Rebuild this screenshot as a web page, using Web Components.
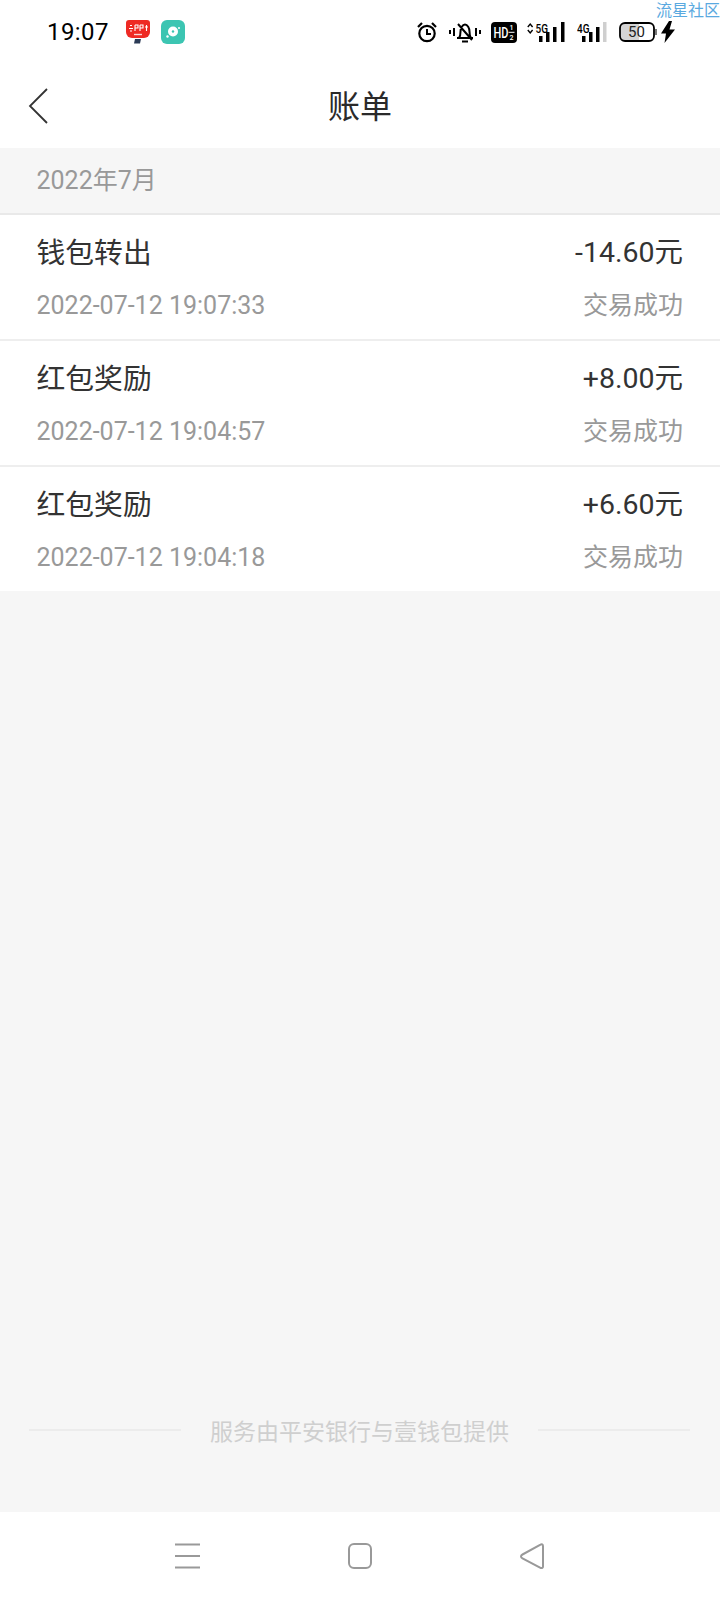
<!DOCTYPE html>
<html lang="zh"><head><meta charset="utf-8"><title>账单</title>
<style>
html,body{margin:0;padding:0;height:1600px;overflow:hidden;background:#f6f6f6}
body{font-family:Roboto,"Noto Sans CJK SC",sans-serif}
bill-app{height:1600px}
</style></head><body>
<bill-app>
  <status-bar slot="top"></status-bar>
  <nav-header slot="top">账单</nav-header>
  <month-header>2022年7月</month-header>
  <bill-row title="钱包转出" time="2022-07-12 19:07:33" amount="-14.60元" state="交易成功"></bill-row>
  <bill-row title="红包奖励" time="2022-07-12 19:04:57" amount="+8.00元" state="交易成功"></bill-row>
  <bill-row title="红包奖励" time="2022-07-12 19:04:18" amount="+6.60元" state="交易成功" last></bill-row>
  <service-footer slot="foot">服务由平安银行与壹钱包提供</service-footer>
  <system-nav slot="foot"></system-nav>
</bill-app>
<script>
function def(name,html){customElements.define(name,class extends HTMLElement{
  constructor(){super();this.attachShadow({mode:'open'}).innerHTML=html;}
});}
def('bill-app',`<style>:host{display:flex;flex-direction:column;background:#f6f6f6}
.main{flex:1;display:flex;flex-direction:column}</style>
<slot name="top"></slot><div class="main"><slot></slot></div><slot name="foot"></slot>`);

def('status-bar',`<style>
:host{display:flex;position:relative;overflow:hidden;height:62px;background:#fff;align-items:center;padding:2px 0 0 47px;box-sizing:border-box;color:#000}
.t{font:400 24px/30px Roboto,sans-serif;letter-spacing:.4px;width:79px}
svg{display:block;flex:none}
.mark{position:absolute;right:0;top:0;font:400 16px/18px "Noto Sans CJK SC",sans-serif;color:#5aa9e0;white-space:nowrap}
.app{display:flex;gap:11px;align-items:center}
.right{display:flex;align-items:center;position:absolute;left:417px;top:21px;height:22px}
text{font-family:Roboto,sans-serif;font-weight:500}
</style>
<div class="t">19:07</div>
<div class="app">
<svg width="24" height="24" viewBox="0 0 24 24"><path d="M3 0h18a3 3 0 0 1 3 3v9a6 6 0 0 1-6 6H6a6 6 0 0 1-6-6V3a3 3 0 0 1 3-3z" fill="#ee2a24"/><path d="M3 8.500h4M4 5.500h2M4 11h2M9 5v6M9 5h3v3H9M14 5v6M14 5h3v3h-3M19 7h3M20.500 5v6" stroke="#fff" stroke-width="1.100" fill="none"/><path d="M8 14.500h8" stroke="#fff" stroke-width="1.400" opacity=".8"/><path d="M9 19h6l-1 4.500H8z" fill="#2b3a55"/></svg>
<svg width="24" height="24" viewBox="0 0 24 24"><rect width="24" height="24" rx="6" fill="#3cc5b2"/><circle cx="12" cy="11.500" r="5" fill="#fff"/><circle cx="12" cy="11.500" r="1.200" fill="#3cc5b2"/><circle cx="18" cy="8" r="1" fill="#fff"/><circle cx="6.500" cy="16.500" r="1.200" fill="#fff"/></svg>
</div>
<div class="right">
<svg width="20" height="21" viewBox="0 0 20 21" style="margin-right:12px"><circle cx="10" cy="11.500" r="7.700" fill="none" stroke="#000" stroke-width="2.200"/><path d="M10 7v5h4" fill="none" stroke="#000" stroke-width="2"/><path d="M1 5l4-4M19 5l-4-4" stroke="#000" stroke-width="2.200"/></svg>
<svg width="32" height="22" viewBox="0 0 32 22" style="margin-right:10px"><path d="M1 9v4M5 7v8M27 7v8M31 9v4" stroke="#000" stroke-width="2"/><path d="M8 17h16M10 17c1.500-2 1.500-4 1.500-6.500 0-3.500 2-7 4.500-7s4.500 3.500 4.500 7c0 2.500 0 4.500 1.500 6.500M13 20.500h6M9 3l14 16" fill="none" stroke="#000" stroke-width="2"/></svg>
<svg width="26" height="21" viewBox="0 0 26 21" style="margin-right:10px"><rect width="26" height="21" rx="4" fill="#000"/><text transform="translate(2.500 16) scale(1 1.350)" font-size="11" fill="#fff">HD</text><text x="18.500" y="8" font-size="7" fill="#fff">1</text><text x="18.500" y="18" font-size="7" fill="#fff">2</text><path d="M17.500 10.300h6" stroke="#fff"/></svg>
<svg width="38" height="22" viewBox="0 0 38 22" style="margin-right:12px"><path d="M.8 6l2.400-3 2.400 3M.8 9l2.400 3 2.400-3" fill="none" stroke="#000" stroke-width="1.400"/><text transform="translate(8.500 12) scale(1 1.300)" font-size="10">5G</text><rect x="12" y="15" width="3.500" height="6" fill="#000"/><rect x="19" y="11" width="3.500" height="10" fill="#000"/><rect x="26" y="6" width="3.500" height="15" fill="#000"/><rect x="34" y="1" width="3.500" height="20" fill="#000"/></svg>
<svg width="30" height="22" viewBox="0 0 30 22" style="margin-right:12px"><text transform="translate(0 12) scale(1 1.300)" font-size="10">4G</text><rect x="5" y="15" width="3.500" height="6" fill="#000"/><rect x="12" y="11" width="3.500" height="10" fill="#000"/><rect x="19" y="6" width="3.500" height="15" fill="#000"/><rect x="26" y="1" width="3.500" height="20" fill="#cfcfcf"/></svg>
<svg width="38" height="20" viewBox="0 0 38 20" style="margin-right:4px"><path d="M5 1.500h15v17H5a3.500 3.500 0 0 1-3.500-3.500V5A3.500 3.500 0 0 1 5 1.500z" fill="#d4d4d4"/><rect x="1" y="1" width="34" height="18" rx="5" fill="none" stroke="#000" stroke-width="1.800"/><rect x="36" y="7" width="2" height="6" fill="#777"/><text x="17.500" y="15.200" font-size="15" text-anchor="middle" style="font-weight:400" fill="#222">50</text></svg>
<svg width="14" height="22" viewBox="0 0 14 22"><path d="M8 0L0 12.500h5L3.500 22 14 8.500H8.500L11 0z" fill="#000"/></svg>
</div>
<div class="mark">流星社区</div>`);

def('nav-header',`<style>
:host{display:flex;height:86px;background:#fff;align-items:center;justify-content:center;position:relative;box-sizing:border-box}
.b{position:absolute;left:28px;top:26px}
.c{font:400 32px/40px "Noto Sans CJK SC",sans-serif;color:#2a2a2a;transform:translateY(-1px)}
</style>
<svg class="b" width="20" height="36" viewBox="0 0 20 36"><path d="M19 1L2 18l17 17" fill="none" stroke="#333" stroke-width="1.800"/></svg>
<div class="c"><slot></slot></div>`);

def('month-header',`<style>
:host{display:flex;height:67px;align-items:center;padding:0 36.500px;box-sizing:border-box;background:#f6f6f6;border-bottom:2px solid #e9e9e9;font:400 25px/32px Roboto,"Noto Sans CJK SC",sans-serif;color:#999}
</style><slot></slot>`);

customElements.define('bill-row',class extends HTMLElement{
 constructor(){super();this.attachShadow({mode:'open'});}
 connectedCallback(){const a=n=>this.getAttribute(n),l=this.hasAttribute('last');this.shadowRoot.innerHTML=`<style>
 :host{display:grid;grid-template-columns:1fr auto;grid-template-rows:auto auto;row-gap:18px;height:${l?124:126}px;box-sizing:border-box;padding:19px 37px 0 36.500px;background:#fff;${l?'':'border-bottom:2px solid #eeeeee;'}align-content:start}
 .ti,.am{font:400 28.500px/38px Roboto,"Noto Sans CJK SC",sans-serif;color:#333}
 .ti{font-size:28.800px}
 .am{text-align:right}
 .tm,.st{font:400 25px/32px Roboto,"Noto Sans CJK SC",sans-serif;color:#999}
 .st{text-align:right}
 </style><div class="ti">${a('title')}</div><div class="am">${a('amount')}</div><div class="tm">${a('time')}</div><div class="st">${a('state')}</div>`;}
});

def('service-footer',`<style>
:host{display:flex;align-items:center;gap:29px;padding:0 30px 48px 29px;height:116px;box-sizing:border-box;background:#f6f6f6;font:400 23px/34px "Noto Sans CJK SC",sans-serif;color:#cfcfcf}
i{flex:1;height:2px;background:#ececec}
span{white-space:nowrap}
</style><i></i><span><slot></slot></span><i></i>`);

def('system-nav',`<style>
:host{display:flex;height:88px;background:#fff;align-items:center;justify-content:center;gap:148px;box-sizing:border-box;padding-right:2px}
svg{display:block}
</style>
<svg width="25" height="26" viewBox="0 0 25 26"><path d="M0 1.500h25M0 13h25M0 24.500h25" stroke="#999" stroke-width="2"/></svg>
<svg width="24" height="26" viewBox="0 0 24 26"><rect x="1" y="1" width="22" height="24" rx="5" fill="none" stroke="#999" stroke-width="2"/></svg>
<svg width="24" height="26" viewBox="0 0 24 26"><path d="M23 3c0-1.500-1.200-2.100-2.500-1.300L2.500 11.500c-2 1.100-2 2.700 0 3.800L20.500 24.800c1.300.7 2.500.2 2.500-1.300z" fill="none" stroke="#999" stroke-width="2"/></svg>`);
</script>
</body></html>
